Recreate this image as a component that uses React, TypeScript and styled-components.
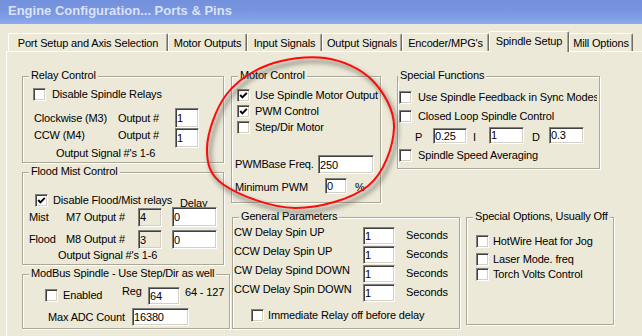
import React from "react";
import styled, { createGlobalStyle } from "styled-components";

const Global = createGlobalStyle`
  html, body { margin: 0; padding: 0; background: #ece9d8; }
  body {
    font-family: "Liberation Sans", Arial, sans-serif;
    font-size: 11px;
    color: #000;
  }
  #root { width: 642px; height: 336px; overflow: hidden; }
`;

const Window = styled.div`
  position: relative;
  width: 642px;
  height: 336px;
  overflow: hidden;
  background: #ece9d8;
  letter-spacing: -0.15px;
`;

const TitleBar = styled.div`
  height: 24px;
  box-sizing: border-box;
  padding-left: 8px;
  background: linear-gradient(to bottom, #7290dc 0%, #7995e0 45%, #819fe5 75%, #8cadec 100%);
  font: bold 13px/21px "Liberation Sans", Arial, sans-serif;
  letter-spacing: 0;
  color: #d9e2f7;
  white-space: nowrap;
`;

const TabStrip = styled.div`
  position: relative;
  z-index: 1;
  display: flex;
  align-items: flex-end;
  height: 27px;
  box-sizing: border-box;
  padding-left: 8px;
`;

const Tab = styled.div<{ $w: number; $active?: boolean }>`
  flex: none;
  width: ${(p) => p.$w}px;
  height: ${(p) => (p.$active ? 21 : 18)}px;
  margin-bottom: ${(p) => (p.$active ? -1 : 0)}px;
  box-sizing: border-box;
  border: 1px solid #fff;
  border-bottom: none;
  border-right-color: #716f64;
  box-shadow: inset -1px 0 0 #aca899;
  border-radius: 2px 2px 0 0;
  background: #ece9d8;
  padding-top: 1px;
  line-height: 16px;
  text-align: center;
  white-space: nowrap;
`;

const Panel = styled.div`
  margin-left: 6px;
  width: 660px;
  height: 300px;
  box-sizing: border-box;
  border-top: 1px solid #fff;
  border-left: 1px solid #fff;
  padding: 24px 0 0 15px;
  display: flex;
  align-items: flex-start;
  gap: 1px;
`;

const Column = styled.div`
  display: flex;
  flex-direction: column;
  align-items: flex-start;
`;

const TopRow = styled.div`
  display: flex;
  align-items: flex-start;
  gap: 16px;
`;

const BottomRow = styled.div`
  display: flex;
  align-items: flex-start;
  gap: 6px;
  margin: 14px 0 0 1px;
`;

const Frame = styled.div<{ $w: number; $h: number; $mt?: number }>`
  flex: none;
  width: ${(p) => p.$w}px;
  height: ${(p) => p.$h}px;
  margin-top: ${(p) => p.$mt ?? 0}px;
  box-sizing: border-box;
  border: 1px solid #aca899;
  box-shadow: inset 1px 1px 0 #fff, 1px 1px 0 #fff;
  display: flex;
  flex-direction: column;
  align-items: flex-start;
`;

const Legend = styled.div<{ $x?: number }>`
  margin: -8px 0 0 ${(p) => p.$x ?? 6}px;
  padding: 0 2px;
  line-height: 13px;
  background: #ece9d8;
  white-space: nowrap;
`;

const CheckRow = styled.div<{ $mt: number; $pl: number; $gap: number; $w?: number }>`
  display: flex;
  align-items: center;
  gap: ${(p) => p.$gap}px;
  height: 13px;
  line-height: 13px;
  box-sizing: border-box;
  margin-top: ${(p) => p.$mt}px;
  padding-left: ${(p) => p.$pl}px;
  white-space: nowrap;
  ${(p) => (p.$w ? `width: ${p.$w}px; overflow: hidden;` : "")}
`;

const Box = styled.span`
  flex: none;
  width: 13px;
  height: 13px;
  box-sizing: border-box;
  background: #fff;
  border: 1px solid;
  border-color: #808080 #fff #fff #808080;
  box-shadow: inset 1px 1px 0 #404040, inset -1px -1px 0 #d4d0c8;
  display: flex;
  align-items: center;
  justify-content: center;
`;

const FieldRow = styled.div<{ $cols: string; $h: number; $mt: number; $pl: number }>`
  display: grid;
  grid-template-columns: ${(p) => p.$cols};
  align-items: center;
  height: ${(p) => p.$h}px;
  margin-top: ${(p) => p.$mt}px;
  padding-left: ${(p) => p.$pl}px;
  line-height: 13px;
  white-space: nowrap;
`;

const Label = styled.span<{ $lift?: number }>`
  display: block;
  margin: ${(p) => {
    const l = p.$lift ?? 0;
    return l >= 0 ? `0 0 ${l * 2}px 0` : `${-l * 2}px 0 0 0`;
  }};
`;

const Field = styled.input.attrs({ readOnly: true })<{ $w: number; $h: number; $off?: boolean; $dy?: number }>`
  display: block;
  width: ${(p) => p.$w}px;
  height: ${(p) => p.$h}px;
  margin: ${(p) => (p.$dy ?? 0) * 2}px 0 0 0;
  box-sizing: border-box;
  padding: 0 0 0 1px;
  font: inherit;
  letter-spacing: inherit;
  color: #000;
  background: ${(p) => (p.$off ? "#ece9d8" : "#fff")};
  border: 1px solid;
  border-color: #808080 #fff #fff #808080;
  box-shadow: inset 1px 1px 0 #404040, inset -1px -1px 0 #d4d0c8;
  outline: none;
`;

const Note = styled.div<{ $mt: number; $pl: number }>`
  line-height: 13px;
  margin-top: ${(p) => p.$mt}px;
  padding-left: ${(p) => p.$pl}px;
  white-space: nowrap;
`;

const FloodHead = styled.div`
  display: grid;
  grid-template-columns: 145px auto;
  align-items: center;
  height: 13px;
  margin-top: 13px;
  padding-left: 12px;
  line-height: 13px;
  white-space: nowrap;
`;

const Overlay = styled.svg`
  position: absolute;
  left: 0;
  top: 0;
  pointer-events: none;
`;

const CheckMark = () => (
  <svg width="9" height="9" viewBox="0 0 9 9">
    <polyline points="1.2,4 3.4,6.3 7.8,1.8" fill="none" stroke="#000" strokeWidth="1.9" />
  </svg>
);

type CheckProps = {
  checked?: boolean;
  mt?: number;
  pl?: number;
  gap?: number;
  w?: number;
  children: React.ReactNode;
};

function Check({ checked, mt = 0, pl = 0, gap = 5, w, children }: CheckProps) {
  return (
    <CheckRow $mt={mt} $pl={pl} $gap={gap} $w={w}>
      <Box>{checked && <CheckMark />}</Box>
      <span>{children}</span>
    </CheckRow>
  );
}

const tabs: [string, number, boolean?][] = [
  ["Port Setup and Axis Selection", 160],
  ["Motor Outputs", 79],
  ["Input Signals", 75],
  ["Output Signals", 80],
  ["Encoder/MPG's", 87],
  ["Spindle Setup", 80, true],
  ["Mill Options", 64],
];

const delays = [
  "CW Delay Spin UP",
  "CCW Delay Spin UP",
  "CW Delay Spind DOWN",
  "CCW Delay Spin DOWN",
];

// smooth closed curve through hand-drawn points (Catmull-Rom)
function smoothPath(pts: [number, number][]): string {
  const n = pts.length;
  let d = `M${pts[0][0]},${pts[0][1]}`;
  for (let i = 0; i < n; i++) {
    const p0 = pts[(i - 1 + n) % n];
    const p1 = pts[i];
    const p2 = pts[(i + 1) % n];
    const p3 = pts[(i + 2) % n];
    const c1x = p1[0] + (p2[0] - p0[0]) / 6;
    const c1y = p1[1] + (p2[1] - p0[1]) / 6;
    const c2x = p2[0] - (p3[0] - p1[0]) / 6;
    const c2y = p2[1] - (p3[1] - p1[1]) / 6;
    d += ` C${c1x.toFixed(1)},${c1y.toFixed(1)} ${c2x.toFixed(1)},${c2y.toFixed(1)} ${p2[0]},${p2[1]}`;
  }
  return d + " Z";
}

const ring = smoothPath([
  [325, 58],
  [372, 80],
  [394, 128],
  [368, 186],
  [295, 208],
  [224, 185],
  [207, 148],
  [226, 95],
  [268, 65],
]);

export default function App() {
  return (
    <Window>
      <Global />
      <TitleBar>Engine Configuration... Ports &amp; Pins</TitleBar>
      <TabStrip>
        {tabs.map(([t, w, a]) => (
          <Tab key={t} $w={w} $active={a}>
            {t}
          </Tab>
        ))}
      </TabStrip>
      <Panel>
        <Column>
          <Frame $w={202} $h={87}>
            <Legend>Relay Control</Legend>
            <Check mt={6} pl={10} gap={6}>
              Disable Spindle Relays
            </Check>
            <FieldRow $cols="84px 57px 24px" $h={20} $mt={7} $pl={11}>
              <Label>Clockwise (M3)</Label>
              <Label>Output #</Label>
              <Field $w={24} $h={20} defaultValue="1" />
            </FieldRow>
            <FieldRow $cols="84px 57px 24px" $h={20} $mt={0} $pl={11}>
              <Label $lift={3}>CCW (M4)</Label>
              <Label $lift={3}>Output #</Label>
              <Field $w={24} $h={20} defaultValue="1" />
            </FieldRow>
            <Note $mt={-1} $pl={33}>
              Output Signal #'s 1-6
            </Note>
          </Frame>

          <Frame $w={202} $h={93} $mt={9}>
            <Legend>Flood Mist Control</Legend>
            <FloodHead>
              <Check checked>Disable Flood/Mist relays</Check>
              <Label $lift={-3}>Delay</Label>
            </FloodHead>
            <FieldRow $cols="37px 72px 34px 45px" $h={20} $mt={3} $pl={6}>
              <Label>Mist</Label>
              <Label>M7 Output #</Label>
              <Field $w={24} $h={19} $off defaultValue="4" />
              <Field $w={45} $h={20} defaultValue="0" />
            </FieldRow>
            <FieldRow $cols="37px 72px 34px 45px" $h={19} $mt={3} $pl={6}>
              <Label>Flood</Label>
              <Label>M8 Output #</Label>
              <Field $w={24} $h={19} $off defaultValue="3" />
              <Field $w={45} $h={19} defaultValue="0" />
            </FieldRow>
            <Note $mt={0} $pl={35}>
              Output Signal #'s 1-6
            </Note>
          </Frame>

          <Frame $w={208} $h={55} $mt={9}>
            <Legend>ModBus Spindle - Use Step/Dir as well</Legend>
            <FieldRow $cols="77px 26px 37px auto" $h={18} $mt={5} $pl={22}>
              <Check>Enabled</Check>
              <Label $lift={4}>Reg</Label>
              <Field $w={32} $h={18} defaultValue="64" />
              <Label $lift={3}>64 - 127</Label>
            </FieldRow>
            <FieldRow $cols="84px 57px" $h={18} $mt={5} $pl={25}>
              <Label>Max ADC Count</Label>
              <Field $w={57} $h={18} defaultValue="16380" />
            </FieldRow>
          </Frame>
        </Column>

        <Column>
          <TopRow>
            <Frame $w={150} $h={127}>
              <Legend>Motor Control</Legend>
              <Check checked mt={7} pl={5}>
                Use Spindle Motor Output
              </Check>
              <Check checked mt={3} pl={5}>
                PWM Control
              </Check>
              <Check mt={3} pl={5}>
                Step/Dir Motor
              </Check>
              <FieldRow $cols="83px 56px" $h={19} $mt={21} $pl={3}>
                <Label>PWMBase Freq.</Label>
                <Field $w={56} $h={19} defaultValue="250" />
              </FieldRow>
              <FieldRow $cols="90px 30px auto" $h={16} $mt={3} $pl={3}>
                <Label $lift={-2}>Minimum PWM</Label>
                <Field $w={22} $h={16} defaultValue="0" />
                <Label $lift={-2}>%</Label>
              </FieldRow>
            </Frame>

            <Frame $w={203} $h={93}>
              <Legend $x={0}>Special Functions</Legend>
              <Check mt={9} pl={1} gap={6} w={199}>
                Use Spindle Feedback in Sync Modes
              </Check>
              <Check mt={6} pl={1} gap={6}>
                Closed Loop Spindle Control
              </Check>
              <FieldRow $cols="18px 40px 16px 43px 17px 35px" $h={18} $mt={3} $pl={17}>
                <Label $lift={-2}>P</Label>
                <Field $w={34} $h={16} $dy={1} defaultValue="0.25" />
                <Label $lift={-2}>I</Label>
                <Field $w={35} $h={17} defaultValue="1" />
                <Label $lift={-2}>D</Label>
                <Field $w={35} $h={17} defaultValue="0.3" />
              </FieldRow>
              <Check mt={5} pl={1} gap={6}>
                Spindle Speed Averaging
              </Check>
            </Frame>
          </TopRow>

          <BottomRow>
            <Frame $w={228} $h={112}>
              <Legend>General Parameters</Legend>
              {delays.map((d, i) => (
                <FieldRow key={d} $cols="129px 43px auto" $h={18} $mt={i === 0 ? 3 : 1} $pl={1}>
                  <Label $lift={3}>{d}</Label>
                  <Field $w={32} $h={18} defaultValue="1" />
                  <Label>Seconds</Label>
                </FieldRow>
              ))}
              <Check mt={8} pl={18} gap={4}>
                Immediate Relay off before delay
              </Check>
            </Frame>

            <Frame $w={148} $h={108}>
              <Legend>Special Options, Usually Off</Legend>
              <Check mt={12} pl={9} gap={4}>
                HotWire Heat for Jog
              </Check>
              <Check mt={5} pl={9} gap={4}>
                Laser Mode. freq
              </Check>
              <Check mt={2} pl={9} gap={4}>
                Torch Volts Control
              </Check>
            </Frame>
          </BottomRow>
        </Column>
      </Panel>

      <Overlay width="642" height="336" viewBox="0 0 642 336">
        <defs>
          <filter id="soft" x="-20%" y="-20%" width="140%" height="140%">
            <feGaussianBlur stdDeviation="2.2" />
          </filter>
        </defs>
        <path
          d={ring}
          fill="none"
          stroke="rgba(70,70,60,0.45)"
          strokeWidth="4"
          filter="url(#soft)"
          transform="translate(3 4)"
        />
        <path d={ring} fill="none" stroke="#ff0a0a" strokeWidth="2" />
      </Overlay>
    </Window>
  );
}
